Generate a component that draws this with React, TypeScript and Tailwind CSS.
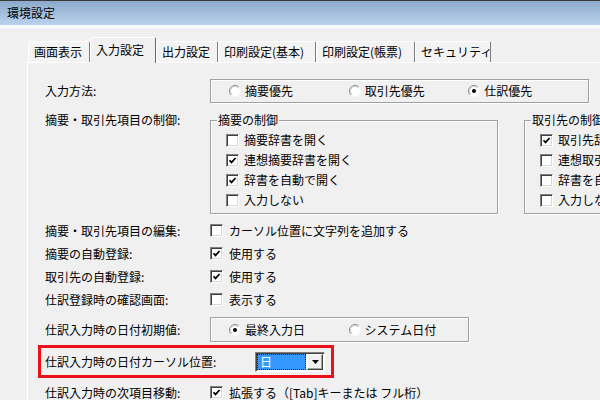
import type { ReactNode } from "react";

/**
 * Small helper to join class names
 */
function cn(...parts: (string | false | undefined)[]) {
  return parts.filter(Boolean).join(" ");
}

function CheckBox({ checked = false }: { checked?: boolean }) {
  return (
    <span className="flex h-[13px] w-[13px] shrink-0 items-center justify-center border border-t-[#808080] border-l-[#808080] border-b-white border-r-white bg-white shadow-[inset_1px_1px_0_#404040,inset_-1px_-1px_0_#d8d8d8]">
      {checked && (
        <svg width="9" height="9" viewBox="0 0 9 9">
          <path d="M1.5 4.2 L3.5 6.4 L7.6 2" fill="none" stroke="#000" strokeWidth="1.7" />
        </svg>
      )}
    </span>
  );
}

function Radio({ checked = false }: { checked?: boolean }) {
  return (
    <svg width="12" height="12" viewBox="0 0 12 12" className="shrink-0">
      <circle cx="6" cy="6" r="5.5" fill="#fff" />
      <path d="M9.9 2.1 A5.5 5.5 0 0 0 2.1 9.9" fill="none" stroke="#8a8a8a" />
      <path d="M9.2 2.8 A4.5 4.5 0 0 0 2.8 9.2" fill="none" stroke="#d0d0d0" />
      <path d="M2.1 9.9 A5.5 5.5 0 0 0 9.9 2.1" fill="none" stroke="#f8f8f8" />
      {checked && <circle cx="6" cy="6" r="2" fill="#000" />}
    </svg>
  );
}

function CheckItem({ checked, children, gap = "gap-[6px]" }: { checked?: boolean; children: ReactNode; gap?: string }) {
  return (
    <div className={cn("flex h-[20px] items-center whitespace-nowrap", gap)}>
      <CheckBox checked={checked} />
      <span>{children}</span>
    </div>
  );
}

function RadioItem({ checked, children }: { checked?: boolean; children: ReactNode }) {
  return (
    <div className="flex w-[120px] items-center gap-[4px] whitespace-nowrap">
      <Radio checked={checked} />
      <span>{children}</span>
    </div>
  );
}

function Row({ label, children, className }: { label: string; children: ReactNode; className?: string }) {
  return (
    <div className={cn("flex items-center", className)}>
      <div className="w-[165px] shrink-0 whitespace-nowrap">{label}</div>
      {children}
    </div>
  );
}

const etched = "border border-[#a0a0a0] shadow-[1px_1px_0_#fff,inset_1px_1px_0_#fff]";

function GroupBox({ title, items, className }: { title: string; items: [string, boolean][]; className?: string }) {
  return (
    <fieldset className={cn("m-0 min-w-0 shrink-0 p-0 pb-[3px]", etched, className)}>
      <legend className="ml-[6px] px-[1px] leading-[14px]">{title}</legend>
      <div className="mt-[3px] pl-[15px]">
        {items.map(([text, checked]) => (
          <CheckItem key={text} checked={checked} gap="gap-[5px]">
            {text}
          </CheckItem>
        ))}
      </div>
    </fieldset>
  );
}

const tabs = [
  { name: "画面表示", w: "w-[62px]" },
  { name: "入力設定", w: "w-[66px]", active: true },
  { name: "出力設定", w: "w-[62px]" },
  { name: "印刷設定(基本)", w: "w-[98px]" },
  { name: "印刷設定(帳票)", w: "w-[99px]" },
  { name: "セキュリティ", w: "w-[76px]" },
];

export default function App() {
  return (
    <div className="flex h-[400px] w-[600px] flex-col overflow-hidden bg-[#f0f0f0] font-['Noto_Sans_CJK_JP',sans-serif] text-[12px] leading-[14px] text-black">
      {/* Title bar */}
      <div className="flex h-[25px] shrink-0 items-center border-t border-[#3a3a3a] bg-gradient-to-b from-[#8da9cb] to-[#bad2ec] pl-[7px]">
        環境設定
      </div>
      <div className="h-[3px] shrink-0 bg-[#f6f8fa]" />

      <div className="flex flex-1">
        <div className="w-[2px] bg-[#eef2f6]" />
        <div className="w-px bg-[#707070]" />
        <div className="flex flex-1 flex-col pl-[27px] pt-[9px]">
          {/* Tabs */}
          <div className="ml-px flex items-end">
            {tabs.map((t) =>
              t.active ? (
                <div
                  key={t.name}
                  className={cn(
                    "relative z-10 -mb-px flex h-[26px] shrink-0 items-start rounded-t-[2px] border-l border-t border-r border-l-white border-t-white border-r-[#6a6a6a] bg-[#f0f0f0] pl-[5px] pt-[5px] whitespace-nowrap",
                    t.w
                  )}
                >
                  {t.name}
                </div>
              ) : (
                <div
                  key={t.name}
                  className={cn(
                    "flex h-[21px] shrink-0 items-center rounded-t-[2px] border-l border-t border-r border-l-white border-t-white border-r-[#7a7a7a] bg-[#f3f3f3] pl-[5px] whitespace-nowrap",
                    t.w
                  )}
                >
                  {t.name}
                </div>
              )
            )}
          </div>

          {/* Tab panel */}
          <div className="flex flex-1 flex-col border-l border-t border-white pl-[17px] pt-[16px]">
            <Row label="入力方法:" className="h-[24px]">
              <div className={cn("flex h-[24px] w-[379px] shrink-0 items-center pl-[18px]", etched)}>
                <RadioItem>摘要優先</RadioItem>
                <RadioItem>取引先優先</RadioItem>
                <RadioItem checked>仕訳優先</RadioItem>
              </div>
            </Row>

            <div className="mt-[10px] flex items-start">
              <div className="w-[165px] shrink-0 whitespace-nowrap">摘要・取引先項目の制御:</div>
              <GroupBox
                title="摘要の制御"
                className="w-[288px]"
                items={[
                  ["摘要辞書を開く", false],
                  ["連想摘要辞書を開く", true],
                  ["辞書を自動で開く", true],
                  ["入力しない", false],
                ]}
              />
              <GroupBox
                title="取引先の制御"
                className="ml-[26px] w-[220px]"
                items={[
                  ["取引先辞書を開く", true],
                  ["連想取引先辞書を開く", false],
                  ["辞書を自動で開く", false],
                  ["入力しない", false],
                ]}
              />
            </div>

            <div className="mt-[5px]">
              <Row label="摘要・取引先項目の編集:" className="h-[23px]">
                <CheckItem>カーソル位置に文字列を追加する</CheckItem>
              </Row>
              <Row label="摘要の自動登録:" className="h-[23px]">
                <CheckItem checked>使用する</CheckItem>
              </Row>
              <Row label="取引先の自動登録:" className="h-[23px]">
                <CheckItem checked>使用する</CheckItem>
              </Row>
              <Row label="仕訳登録時の確認画面:" className="h-[23px]">
                <CheckItem>表示する</CheckItem>
              </Row>
            </div>

            <Row label="仕訳入力時の日付初期値:" className="mt-[6px] h-[25px]">
              <div className={cn("flex h-[25px] w-[259px] shrink-0 items-center pl-[18px]", etched)}>
                <RadioItem checked>最終入力日</RadioItem>
                <RadioItem>システム日付</RadioItem>
              </div>
            </Row>

            {/* Highlighted row */}
            <div className="-ml-[7px] mt-[3px] flex h-[33px] w-[296px] items-center border-[3px] border-[#ec1119] pl-[4px]">
              <div className="w-[210px] shrink-0 whitespace-nowrap">仕訳入力時の日付カーソル位置:</div>
              <div className="flex h-[20px] w-[70px] shrink-0 border border-t-[#808080] border-l-[#808080] border-b-white border-r-white bg-white p-px shadow-[inset_1px_1px_0_#404040]">
                <div className="flex flex-1 items-center border border-dotted border-[#1a1a1a] bg-[#3399ff] pl-[2px] text-white">
                  日
                </div>
                <div className="ml-px flex w-[16px] items-center justify-center border border-t-white border-l-white border-b-[#404040] border-r-[#404040] bg-[#f0f0f0] shadow-[inset_-1px_-1px_0_#a0a0a0]">
                  <svg width="7" height="4" viewBox="0 0 7 4">
                    <path d="M0 0 H7 L3.5 4 Z" fill="#000" />
                  </svg>
                </div>
              </div>
            </div>

            <Row label="仕訳入力時の次項目移動:" className="mt-[3px] h-[23px]">
              <CheckItem checked>拡張する（[Tab]キーまたは フル桁）</CheckItem>
            </Row>
          </div>
        </div>
      </div>
    </div>
  );
}
